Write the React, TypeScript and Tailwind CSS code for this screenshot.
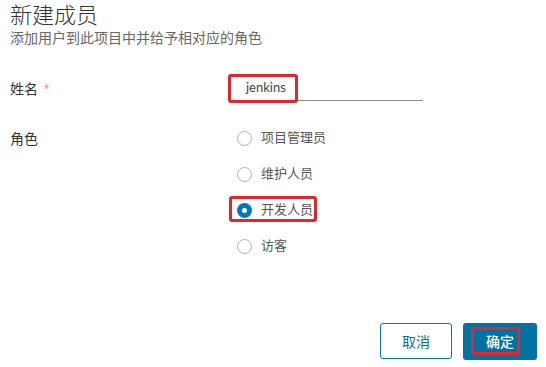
import React from 'react'

const roles = ['项目管理员', '维护人员', '开发人员', '访客']

function Radio({ label, checked, marked }: { label: string; checked?: boolean; marked?: boolean }) {
  return (
    <div className="relative flex items-center h-[36px]">
      {checked ? (
        <span className="w-[15px] h-[15px] rounded-full bg-[#0079b8] flex items-center justify-center">
          <span className="w-[5px] h-[5px] rounded-full bg-white" />
        </span>
      ) : (
        <span className="w-[15px] h-[15px] rounded-full border border-[#b0b0b0] bg-white" />
      )}
      <span className="ml-[9px] text-[13px] text-[#565656]">{label}</span>
      {marked && (
        <span className="absolute left-[-8px] top-[4px] w-[88px] h-[26px] border-[3px] border-[#e3262b] rounded-[3px]" />
      )}
    </div>
  )
}

export default function App() {
  return (
    <div
      className="w-[546px] h-[367px] bg-white px-[10px] text-[#333]"
      style={{ fontFamily: '"Noto Sans", "Noto Sans CJK SC", sans-serif' }}
    >
      <h1 className="text-[22px] leading-[28px] font-light text-[#333]">新建成员</h1>
      <p className="text-[14px] leading-[20px] text-[#666]">添加用户到此项目中并给予相对应的角色</p>

      {/* 姓名 */}
      <div className="flex mt-[26px] h-[29px]">
        <div className="w-[218px] flex items-center text-[14px] text-[#333]">
          姓名
          <span className="ml-[6px] text-[10px] text-[#e88ba0]">*</span>
        </div>
        <div className="relative w-[195px] h-[27px] border-b border-[#8c8c8c] flex items-center">
          <span className="pl-[18px] text-[13px] text-[#444] pt-[1px]" style={{ fontFamily: 'Lato, "Noto Sans", sans-serif' }}>
            jenkins
          </span>
          <span className="absolute left-0 top-0 w-[70px] h-[29px] border-[3px] border-[#e3262b] rounded-[3px]" />
        </div>
      </div>

      {/* 角色 */}
      <div className="flex mt-[17px]">
        <div className="w-[227px] h-[36px] flex items-center text-[14px] text-[#333]">角色</div>
        <div className="flex flex-col">
          {roles.map((r) => (
            <Radio key={r} label={r} checked={r === '开发人员'} marked={r === '开发人员'} />
          ))}
        </div>
      </div>

      {/* Footer */}
      <div className="flex justify-end gap-[11px] mt-[59px] mr-[-1px]">
        <button className="w-[72px] h-[36px] rounded-[3px] border border-[#0079b8] bg-white text-[14px] text-[#0072a3]">
          取消
        </button>
        <button className="relative w-[74px] h-[37px] rounded-[3px] bg-[#0072a3] text-[14px] text-white font-medium">
          确定
          <span className="absolute left-[8px] top-[4px] w-[49px] h-[28px] border-[3px] border-[#e3262b] rounded-[2px]" />
        </button>
      </div>
    </div>
  )
}
